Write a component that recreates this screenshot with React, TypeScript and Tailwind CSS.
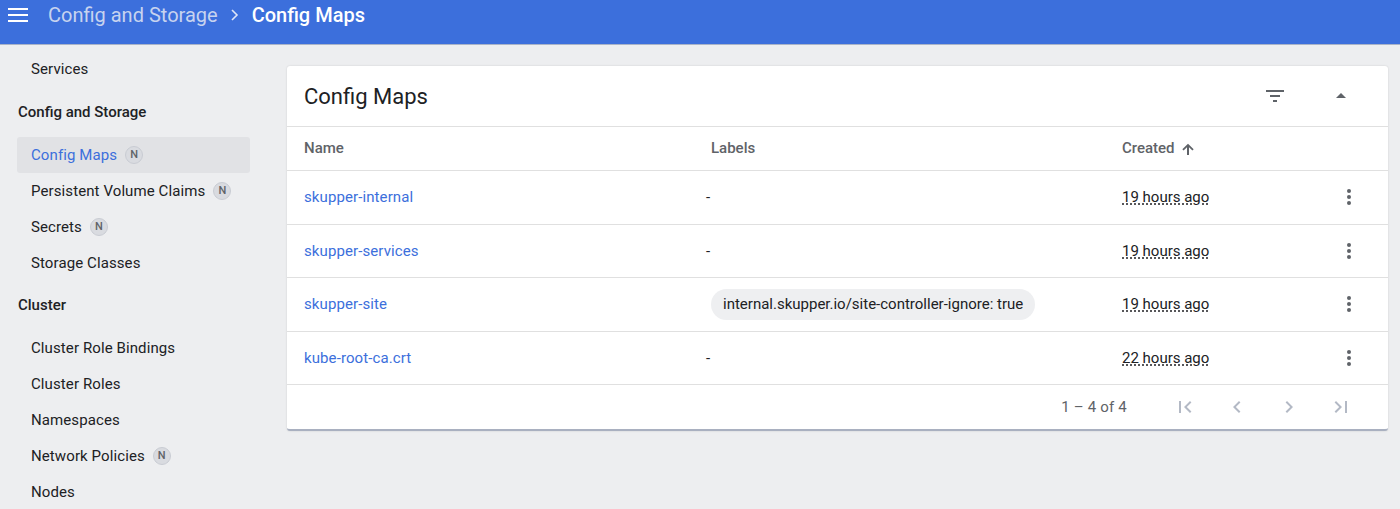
import React from "react";

const font = { fontFamily: "Roboto, 'Noto Sans', sans-serif" };

function NBadge() {
  return (
    <span className="ml-[8px] inline-flex h-[18px] w-[18px] items-center justify-center rounded-full border border-[#c9ccd3] bg-[#d9dbe0] text-[11px] font-medium text-[#5f6368]">
      N
    </span>
  );
}

function SideItem({ label, badge, active }: { label: string; badge?: boolean; active?: boolean }) {
  return (
    <div
      className={
        "flex h-[36px] items-center rounded-[3px] pl-[14px] text-[15px] tracking-[0.1px] " +
        (active ? "bg-[#e1e2e5] text-[#3c6fdc]" : "text-[#202124]")
      }
    >
      <span>{label}</span>
      {badge && <NBadge />}
    </div>
  );
}

function Kebab() {
  return (
    <svg width="24" height="24" viewBox="0 0 24 24" fill="#5f6368">
      <circle cx="12" cy="6" r="2" />
      <circle cx="12" cy="12" r="2" />
      <circle cx="12" cy="18" r="2" />
    </svg>
  );
}

const rows = [
  { name: "skupper-internal", label: null, created: "19 hours ago" },
  { name: "skupper-services", label: null, created: "19 hours ago" },
  { name: "skupper-site", label: "internal.skupper.io/site-controller-ignore: true", created: "19 hours ago" },
  { name: "kube-root-ca.crt", label: null, created: "22 hours ago" },
];

export default function App() {
  return (
    <div className="h-[509px] w-[1400px] overflow-hidden bg-[#edeef0]" style={font}>
      {/* Header */}
      <div className="h-[45px] border-b border-[#a9b3c8] bg-[#3c6fdc]">
        <div className="flex h-[30px] items-center pl-[8px]">
          <svg width="20" height="16" viewBox="0 0 20 16" fill="white">
            <rect x="0" y="1" width="20" height="2" />
            <rect x="0" y="7" width="20" height="2" />
            <rect x="0" y="13" width="20" height="2" />
          </svg>
          <span className="ml-[20px] text-[20px] text-[#c7d3ef]">Config and Storage</span>
          <svg className="ml-[11px]" width="12" height="14" viewBox="0 0 12 14" fill="none" stroke="#dfe6f7" strokeWidth="1.6">
            <path d="M3 2l5 5-5 5" />
          </svg>
          <span className="ml-[11px] text-[20px] font-medium text-white">Config Maps</span>
        </div>
      </div>

      <div className="flex">
        {/* Sidebar */}
        <div className="w-[268px] shrink-0 pl-[17px] pr-[18px] pt-[6px]">
          <SideItem label="Services" />
          <div className="flex h-[50px] items-center pl-[1px] text-[15px] font-medium text-[#202124]">Config and Storage</div>
          <SideItem label="Config Maps" badge active />
          <SideItem label="Persistent Volume Claims" badge />
          <SideItem label="Secrets" badge />
          <SideItem label="Storage Classes" />
          <div className="flex h-[49px] items-center pl-[1px] text-[15px] font-medium text-[#202124]">Cluster</div>
          <SideItem label="Cluster Role Bindings" />
          <SideItem label="Cluster Roles" />
          <SideItem label="Namespaces" />
          <SideItem label="Network Policies" badge />
          <SideItem label="Nodes" />
        </div>

        {/* Card */}
        <div className="mt-[21px] w-[1101px] ml-[19px]">
          <div className="rounded-[3px] border-b-2 border-[#a9b0c0] bg-white shadow-[0_0_2px_rgba(0,0,0,0.15)]">
            <div className="flex h-[61px] items-center border-b border-[#e0e0e0] pl-[17px] pr-[35px]">
              <span className="flex-1 text-[22px] text-[#202124]">Config Maps</span>
              <svg width="24" height="24" viewBox="0 0 24 24" fill="#5f6368">
                <path d="M3 6h18v2H3zM7 11h10v2H7zM10 16h4v2h-4z" />
              </svg>
              <svg className="ml-[42px]" width="24" height="24" viewBox="0 0 24 24" fill="#5f6368">
                <path d="M7 14l5-5 5 5z" />
              </svg>
            </div>
            {/* Column header */}
            <div className="flex h-[44px] items-center border-b border-[#e0e0e0] text-[15px] font-medium text-[#5f6368]">
              <div className="w-[407px] pl-[17px]">Name</div>
              <div className="w-[411px] pl-[17px]">Labels</div>
              <div className="flex items-center pl-[17px]">
                Created
                <svg className="ml-[5px]" width="16" height="16" viewBox="0 0 24 24" fill="#5f6368">
                  <path d="M3.5 12.5l1.9 1.9L10.5 9.3V21h3V9.3l5.1 5.1 1.9-1.9L12 4z" />
                </svg>
              </div>
            </div>
            {rows.map((r) => (
              <div key={r.name} className="flex h-[53.5px] items-center border-b border-[#e0e0e0] text-[15px]">
                <div className="w-[407px] pl-[17px] tracking-[0.1px] text-[#3c6fdc]">{r.name}</div>
                <div className="w-[411px] text-[#202124]">
                  {r.label ? (
                    <span className="ml-[17px] inline-block rounded-full bg-[#eeeff1] px-[12px] py-[4px] text-[15px]">{r.label}</span>
                  ) : (
                    <span className="pl-[12px]">-</span>
                  )}
                </div>
                <div className="flex-1 pl-[17px] text-[#202124]">
                  <span className="underline decoration-dotted decoration-[#202124] underline-offset-[2px]">{r.created}</span>
                </div>
                <div className="mr-[27px]">
                  <Kebab />
                </div>
              </div>
            ))}
            {/* Pagination */}
            <div className="flex h-[44px] items-center justify-end pr-[35px] text-[15px] text-[#5f6368]">
              <span className="mr-[46px] tracking-[0.2px]">1 – 4 of 4</span>
              <div className="flex items-center gap-[28px]">
                <svg width="24" height="24" viewBox="0 0 24 24" fill="#b3b9c5">
                  <path d="M18.41 16.59L13.82 12l4.59-4.59L17 6l-6 6 6 6zM6 6h2v12H6z" />
                </svg>
                <svg width="24" height="24" viewBox="0 0 24 24" fill="#b3b9c5">
                  <path d="M15.41 7.41L14 6l-6 6 6 6 1.41-1.41L10.83 12z" />
                </svg>
                <svg width="24" height="24" viewBox="0 0 24 24" fill="#b3b9c5">
                  <path d="M10 6L8.59 7.41 13.17 12l-4.58 4.59L10 18l6-6z" />
                </svg>
                <svg width="24" height="24" viewBox="0 0 24 24" fill="#b3b9c5">
                  <path d="M5.59 7.41L10.18 12l-4.59 4.59L7 18l6-6-6-6zM16 6h2v12h-2z" />
                </svg>
              </div>
            </div>
          </div>
        </div>
      </div>
    </div>
  );
}
